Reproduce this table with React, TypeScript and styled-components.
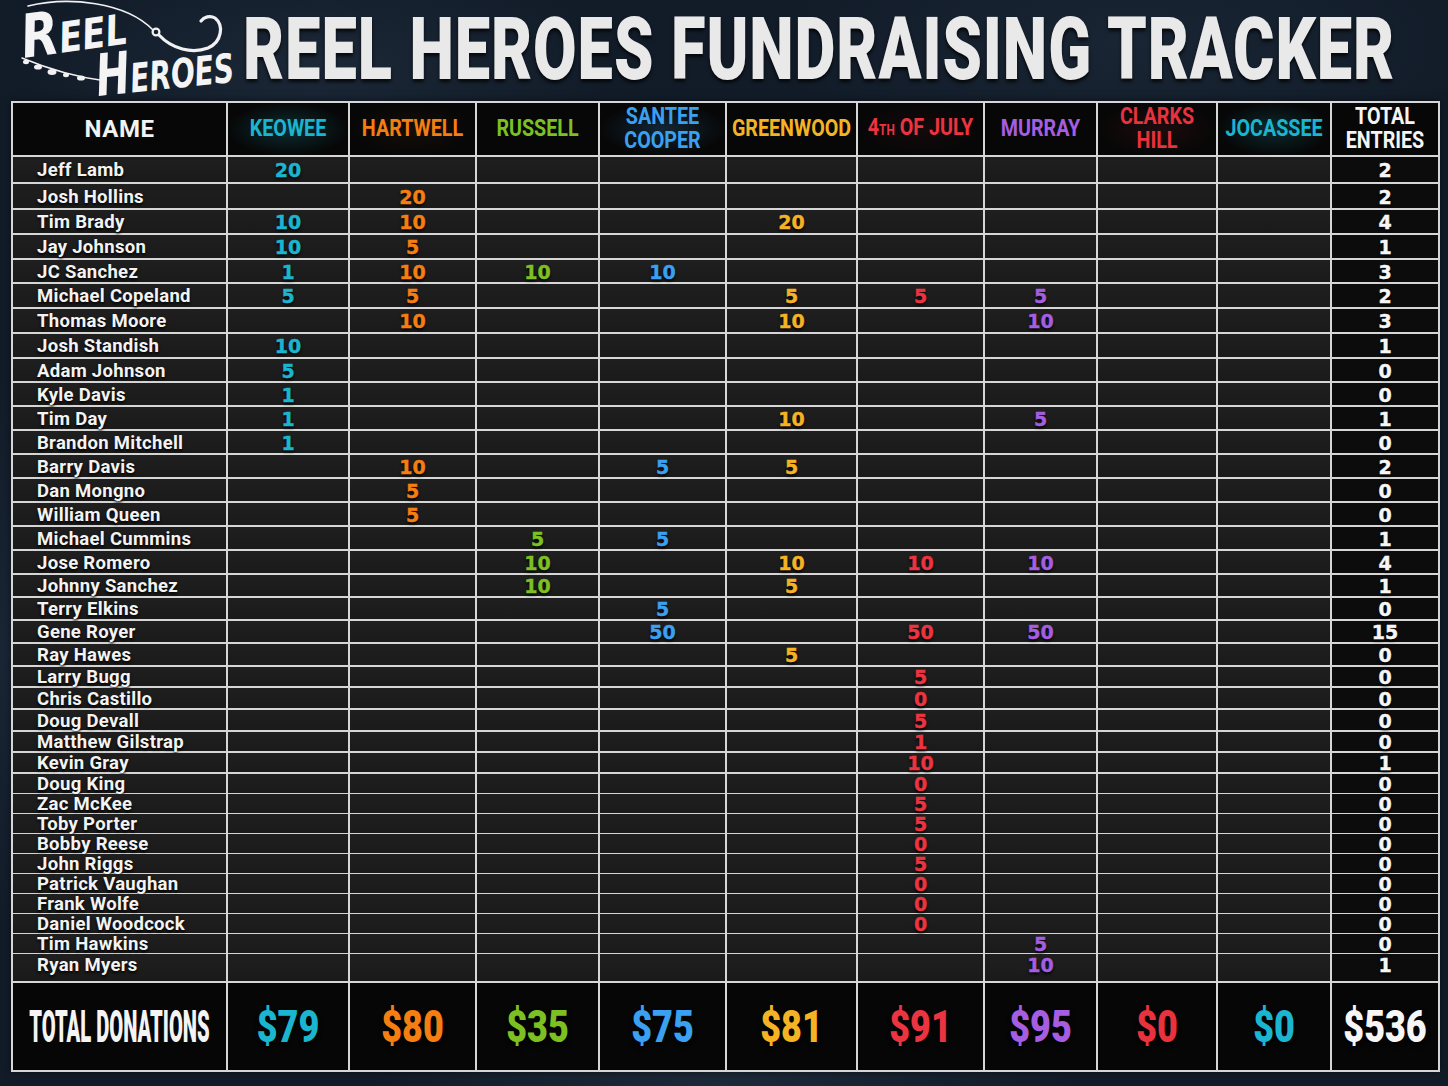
import React from 'react';
import styled, { createGlobalStyle } from 'styled-components';

const GlobalStyle = createGlobalStyle`
  * { box-sizing: border-box; }
  html, body { margin: 0; padding: 0; background: #151f2b; }
  body { font-family: Roboto, 'Liberation Sans', sans-serif; overflow: hidden; }
`;

const LINE = '#d6d6d6';

type Col = { key: string; label: React.ReactNode; color: string; w: number; glow?: string };

const columns: Col[] = [
  { key: 'k', label: 'KEOWEE', color: '#1bb5cf', w: 122, glow: 'rgba(27,181,207,0.22)' },
  { key: 'h', label: 'HARTWELL', color: '#f47e12', w: 127, glow: 'rgba(244,126,18,0.06)' },
  { key: 'r', label: 'RUSSELL', color: '#7dc022', w: 123 },
  { key: 's', label: <>SANTEE<br />COOPER</>, color: '#3ba0ef', w: 127, glow: 'rgba(59,160,239,0.2)' },
  { key: 'g', label: 'GREENWOOD', color: '#f4b324', w: 131 },
  { key: 'j', label: null, color: '#ec3440', w: 127, glow: 'rgba(236,52,64,0.06)' },
  { key: 'm', label: 'MURRAY', color: '#a55ee0', w: 113 },
  { key: 'c', label: <>CLARKS<br />HILL</>, color: '#e8323d', w: 120, glow: 'rgba(232,50,61,0.1)' },
  { key: 'o', label: 'JOCASSEE', color: '#1bb5cf', w: 114, glow: 'rgba(27,181,207,0.2)' },
];

type Entry = { name: string; v: Record<string, number>; total: number; h: number; top?: boolean };

const rows: Entry[] = [
  { name: 'Jeff Lamb', v: { k: 20 }, total: 2, h: 27 },
  { name: 'Josh Hollins', v: { h: 20 }, total: 2, h: 26 },
  { name: 'Tim Brady', v: { k: 10, h: 10, g: 20 }, total: 4, h: 25 },
  { name: 'Jay Johnson', v: { k: 10, h: 5 }, total: 1, h: 25 },
  { name: 'JC Sanchez', v: { k: 1, h: 10, r: 10, s: 10 }, total: 3, h: 24 },
  { name: 'Michael Copeland', v: { k: 5, h: 5, g: 5, j: 5, m: 5 }, total: 2, h: 25 },
  { name: 'Thomas Moore', v: { h: 10, g: 10, m: 10 }, total: 3, h: 25 },
  { name: 'Josh Standish', v: { k: 10 }, total: 1, h: 25 },
  { name: 'Adam Johnson', v: { k: 5 }, total: 0, h: 24 },
  { name: 'Kyle Davis', v: { k: 1 }, total: 0, h: 24 },
  { name: 'Tim Day', v: { k: 1, g: 10, m: 5 }, total: 1, h: 24 },
  { name: 'Brandon Mitchell', v: { k: 1 }, total: 0, h: 24 },
  { name: 'Barry Davis', v: { h: 10, s: 5, g: 5 }, total: 2, h: 24 },
  { name: 'Dan Mongno', v: { h: 5 }, total: 0, h: 24 },
  { name: 'William Queen', v: { h: 5 }, total: 0, h: 24 },
  { name: 'Michael Cummins', v: { r: 5, s: 5 }, total: 1, h: 24 },
  { name: 'Jose Romero', v: { r: 10, g: 10, j: 10, m: 10 }, total: 4, h: 24 },
  { name: 'Johnny Sanchez', v: { r: 10, g: 5 }, total: 1, h: 23 },
  { name: 'Terry Elkins', v: { s: 5 }, total: 0, h: 23 },
  { name: 'Gene Royer', v: { s: 50, j: 50, m: 50 }, total: 15, h: 23 },
  { name: 'Ray Hawes', v: { g: 5 }, total: 0, h: 23 },
  { name: 'Larry Bugg', v: { j: 5 }, total: 0, h: 21 },
  { name: 'Chris Castillo', v: { j: 0 }, total: 0, h: 22 },
  { name: 'Doug Devall', v: { j: 5 }, total: 0, h: 22 },
  { name: 'Matthew Gilstrap', v: { j: 1 }, total: 0, h: 21 },
  { name: 'Kevin Gray', v: { j: 10 }, total: 1, h: 21 },
  { name: 'Doug King', v: { j: 0 }, total: 0, h: 20 },
  { name: 'Zac McKee', v: { j: 5 }, total: 0, h: 20 },
  { name: 'Toby Porter', v: { j: 5 }, total: 0, h: 20 },
  { name: 'Bobby Reese', v: { j: 0 }, total: 0, h: 20 },
  { name: 'John Riggs', v: { j: 5 }, total: 0, h: 20 },
  { name: 'Patrick Vaughan', v: { j: 0 }, total: 0, h: 20 },
  { name: 'Frank Wolfe', v: { j: 0 }, total: 0, h: 20 },
  { name: 'Daniel Woodcock', v: { j: 0 }, total: 0, h: 20 },
  { name: 'Tim Hawkins', v: { m: 5 }, total: 0, h: 20 },
  { name: 'Ryan Myers', v: { m: 10 }, total: 1, h: 29, top: true },
];

const donations = ['$79', '$80', '$35', '$75', '$81', '$91', '$95', '$0', '$0'];

const template = ['215px', ...columns.map((c) => `${c.w}px`), '108px'].join(' ');

const Page = styled.div`
  width: 1448px;
  height: 1086px;
  overflow: hidden;
  background:
    radial-gradient(ellipse 420px 160px at 22% 6%, rgba(62, 82, 106, 0.22), transparent 70%),
    radial-gradient(ellipse 500px 180px at 78% 4%, rgba(55, 74, 98, 0.2), transparent 70%),
    radial-gradient(ellipse 300px 400px at 0% 60%, rgba(55, 74, 98, 0.22), transparent 70%),
    radial-gradient(ellipse 500px 120px at 50% 100%, rgba(62, 82, 106, 0.26), transparent 70%),
    #121c29;
`;

const Header = styled.header`
  height: 101px;
  display: flex;
  align-items: flex-start;
`;

const LogoWrap = styled.div`
  width: 243px;
  height: 101px;
  flex: none;
  padding-left: 14px;
`;

const Title = styled.h1`
  margin: 18px 0 0 0;
  font-family: Roboto, 'Liberation Sans', sans-serif;
  font-weight: 900;
  font-size: 63.2px;
  line-height: 63.5px;
  letter-spacing: 0.9px;
  color: #e9e9e9;
  white-space: nowrap;
  transform: scaleY(1.39);
  text-shadow: 0 2px 3px rgba(0, 0, 0, 0.75);
`;

const Table = styled.div`
  margin-left: 11px;
  width: 1429px;
  border-left: 2px solid ${LINE};
  border-top: 2px solid ${LINE};
  box-shadow: 0 0 8px rgba(0, 0, 0, 0.5);
`;

const Row = styled.div<{ $h: number }>`
  display: grid;
  grid-template-columns: ${template};
  height: ${(p) => p.$h}px;
`;

const Cell = styled.div<{ $bg?: string; $top?: boolean }>`
  border-right: 2px solid ${LINE};
  border-bottom: 2px solid ${LINE};
  display: flex;
  align-items: ${(p) => (p.$top ? 'flex-start' : 'center')};
  justify-content: center;
  padding-top: ${(p) => (p.$top ? '2px' : '1px')};
  background: ${(p) => p.$bg || 'linear-gradient(180deg, #1f1f1f, #1a1a1a)'};
`;

const NameCell = styled(Cell)`
  justify-content: flex-start;
  padding-left: 24px;
`;

const HeadCell = styled(Cell)<{ $glow?: string }>`
  padding-top: 0;
  background: ${(p) =>
    p.$glow ? `radial-gradient(ellipse at center, ${p.$glow}, transparent 72%), #070707` : '#070707'};
`;

const HeadLabel = styled.span<{ $color: string }>`
  display: inline-block;
  font-family: Roboto, 'Liberation Sans', sans-serif;
  font-weight: 700;
  font-size: 19.7px;
  line-height: 20px;
  text-align: center;
  color: ${(p) => p.$color};
  transform: scaleY(1.17);
  white-space: nowrap;
`;

const NameHead = styled.span`
  font-family: Roboto, 'Liberation Sans', sans-serif;
  font-weight: 700;
  font-size: 24px;
  color: #f2f2f2;
  letter-spacing: 0.5px;
`;

const Small = styled.span`
  font-size: 0.6em;
`;

const Name = styled.span`
  font-family: Roboto, 'Liberation Sans', sans-serif;
  font-weight: 700;
  font-size: 18.5px;
  line-height: 18px;
  letter-spacing: 0.3px;
  color: #f3f3f3;
  white-space: nowrap;
  text-shadow: 0 2px 3px rgba(0, 0, 0, 0.95);
`;

const Num = styled.span<{ $color: string }>`
  font-family: 'DejaVu Sans', Roboto, sans-serif;
  font-weight: 700;
  font-size: 19px;
  line-height: 18px;
  color: ${(p) => p.$color};
  -webkit-text-stroke: 0.4px ${(p) => p.$color};
  text-shadow: 0 2px 3px rgba(0, 0, 0, 0.95);
`;

const FootLabel = styled.span`
  display: inline-block;
  font-family: Roboto, 'Liberation Sans', sans-serif;
  font-weight: 900;
  font-size: 20.2px;
  line-height: 22px;
  color: #f4f4f4;
  white-space: nowrap;
  transform: scaleY(2.17);
`;

const FootValue = styled.span<{ $color: string }>`
  display: inline-block;
  font-family: Roboto, 'Liberation Sans', sans-serif;
  font-weight: 900;
  font-size: 36px;
  line-height: 40px;
  color: ${(p) => p.$color};
  transform: scaleY(1.25);
  text-shadow: 0 2px 4px rgba(0, 0, 0, 0.8);
`;

const Logo = () => (
  <svg width="229" height="101" viewBox="0 0 229 101" overflow="visible">
    <g fill="none" stroke="#f1f1f1" strokeLinecap="round">
      <path d="M14 6 C 54 -4, 112 2, 139 30" strokeWidth="1.6" />
      <circle cx="142" cy="32" r="3.4" strokeWidth="2.2" />
      <path d="M145 35 C 158 49, 178 54, 194 48 C 208 42, 210 25, 201 18 C 196 15, 190 17, 187 21" strokeWidth="3.2" />
      <path d="M8 58 C 32 68, 60 77, 92 81" strokeWidth="1.4" />
    </g>
    <g fill="#f1f1f1">
      <ellipse cx="12" cy="62" rx="3" ry="2.2" />
      <ellipse cx="24" cy="67" rx="4" ry="2.6" />
      <ellipse cx="38" cy="72" rx="4.5" ry="3" />
      <ellipse cx="52" cy="75" rx="3" ry="2.2" />
      <ellipse cx="67" cy="78" rx="4" ry="2.6" />
    </g>
    <text
      x="10"
      y="58"
      fill="#f4f4f4"
      fontFamily="'DejaVu Sans', sans-serif"
      fontWeight="700"
      fontStyle="italic"
      transform="rotate(-8 10 58)"
      textLength="106"
      lengthAdjust="spacingAndGlyphs"
    >
      <tspan fontSize="60">R</tspan>
      <tspan fontSize="42">EEL</tspan>
    </text>
    <text
      x="84"
      y="96"
      fill="#f4f4f4"
      fontFamily="'DejaVu Sans', sans-serif"
      fontWeight="700"
      fontStyle="italic"
      transform="rotate(-6 84 96)"
      textLength="138"
      lengthAdjust="spacingAndGlyphs"
    >
      <tspan fontSize="58">H</tspan>
      <tspan fontSize="40">EROES</tspan>
    </text>
  </svg>
);

export default function App() {
  return (
    <Page>
      <GlobalStyle />
      <Header>
        <LogoWrap>
          <Logo />
        </LogoWrap>
        <Title>REEL HEROES FUNDRAISING TRACKER</Title>
      </Header>

      <Table>
        <Row $h={54}>
          <HeadCell>
            <NameHead>NAME</NameHead>
          </HeadCell>
          {columns.map((c) => (
            <HeadCell key={c.key} $glow={c.glow}>
              <HeadLabel $color={c.color}>
                {c.label ?? (
                  <>
                    4<Small>TH</Small> OF JULY
                  </>
                )}
              </HeadLabel>
            </HeadCell>
          ))}
          <HeadCell>
            <HeadLabel $color="#f4f4f4">
              TOTAL
              <br />
              ENTRIES
            </HeadLabel>
          </HeadCell>
        </Row>

        {rows.map((r) => (
          <Row key={r.name} $h={r.h}>
            <NameCell $top={r.top}>
              <Name>{r.name}</Name>
            </NameCell>
            {columns.map((c) => (
              <Cell key={c.key} $top={r.top}>
                {r.v[c.key] !== undefined && <Num $color={c.color}>{r.v[c.key]}</Num>}
              </Cell>
            ))}
            <Cell $top={r.top} $bg="#0c0c0c">
              <Num $color="#f6f6f6">{r.total}</Num>
            </Cell>
          </Row>
        ))}

        <Row $h={89}>
          <Cell $bg="#060606">
            <FootLabel>TOTAL DONATIONS</FootLabel>
          </Cell>
          {columns.map((c, i) => (
            <Cell key={c.key} $bg="#060606">
              <FootValue $color={c.color}>{donations[i]}</FootValue>
            </Cell>
          ))}
          <Cell $bg="#060606">
            <FootValue $color="#f6f6f6">$536</FootValue>
          </Cell>
        </Row>
      </Table>
    </Page>
  );
}
